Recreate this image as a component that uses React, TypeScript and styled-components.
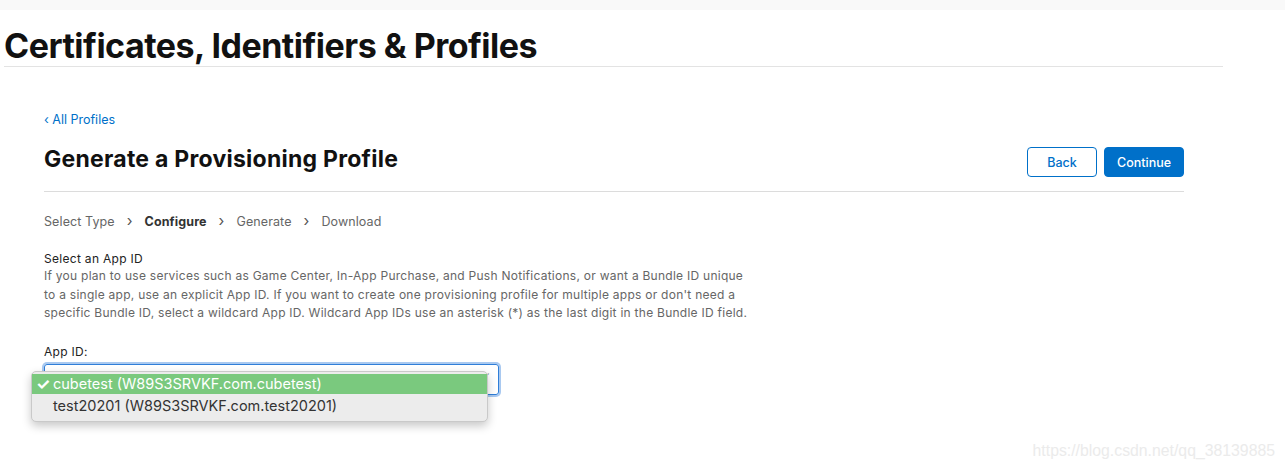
import React from 'react';
import styled, { createGlobalStyle } from 'styled-components';

const GlobalStyle = createGlobalStyle`
  html, body {
    margin: 0;
    padding: 0;
    background: #ffffff;
    font-family: Inter, "Noto Sans", "Liberation Sans", sans-serif;
    color: #1d1d1f;
  }
`;

const steps = [
  { label: 'Select Type', current: false },
  { label: 'Configure', current: true },
  { label: 'Generate', current: false },
  { label: 'Download', current: false },
];

const descriptionLines = [
  'If you plan to use services such as Game Center, In-App Purchase, and Push Notifications, or want a Bundle ID unique',
  "to a single app, use an explicit App ID. If you want to create one provisioning profile for multiple apps or don't need a",
  'specific Bundle ID, select a wildcard App ID. Wildcard App IDs use an asterisk (*) as the last digit in the Bundle ID field.',
];

const appIds = [
  'cubetest (W89S3SRVKF.com.cubetest)',
  'test20201 (W89S3SRVKF.com.test20201)',
];

const App: React.FC = () => {
  return (
    <Page>
      <GlobalStyle />
      <TopBar />
      <Header>
        <Title>Certificates, Identifiers &amp; Profiles</Title>
      </Header>
      <Main>
        <BackLink>‹ All Profiles</BackLink>
        <HeadRow>
          <PageTitle>Generate a Provisioning Profile</PageTitle>
          <Buttons>
            <Button width={70}>Back</Button>
            <Button width={80} primary>Continue</Button>
          </Buttons>
        </HeadRow>
        <Steps>
          {steps.map((step, i) => (
            <React.Fragment key={step.label}>
              {i > 0 && <Chevron>›</Chevron>}
              <Step current={step.current}>{step.label}</Step>
            </React.Fragment>
          ))}
        </Steps>
        <Section>
          <SectionTitle>Select an App ID</SectionTitle>
          <Description>
            {descriptionLines.map((line, i) => (
              <React.Fragment key={i}>
                {line}
                {i < descriptionLines.length - 1 && <br />}
              </React.Fragment>
            ))}
          </Description>
        </Section>
        <Field>
          <FieldLabel>App ID:</FieldLabel>
          <SelectBox>
            <Arrow>⌄</Arrow>
            <Menu>
              {appIds.map((id, i) => (
                <MenuItem key={id} selected={i === 0}>
                  <Check>{i === 0 ? '✓' : ''}</Check>
                  {id}
                </MenuItem>
              ))}
            </Menu>
          </SelectBox>
        </Field>
      </Main>
      <Watermark>https://blog.csdn.net/qq_38139885</Watermark>
    </Page>
  );
};

const Page = styled.div`
  position: relative;
  width: 1285px;
  height: 469px;
  overflow: hidden;
`;

const TopBar = styled.div`
  height: 10px;
  background: #f9f9f9;
`;

const Header = styled.div`
  margin: 0 62px 0 4px;
  padding-top: 16px;
  border-bottom: 1px solid #e3e3e3;
`;

const Title = styled.h1`
  margin: 0;
  font-size: 34px;
  line-height: 40px;
  font-weight: 700;
  letter-spacing: -0.5px;
  color: #111111;
`;

const Main = styled.div`
  width: 1140px;
  margin-left: 44px;
  padding-top: 45px;
`;

const BackLink = styled.a`
  display: block;
  font-size: 12.5px;
  line-height: 16px;
  color: #0070c9;
`;

const HeadRow = styled.div`
  display: flex;
  align-items: center;
  justify-content: space-between;
  height: 48px;
  margin-top: 9px;
  padding-bottom: 6px;
  border-bottom: 1px solid #dcdcdc;
`;

const PageTitle = styled.h2`
  margin: -4px 0 0;
  font-size: 23px;
  font-weight: 700;
  letter-spacing: 0.25px;
  color: #111111;
`;

const Buttons = styled.div`
  display: flex;
  gap: 7px;
  margin-top: 2px;
`;

const Button = styled.button<{ primary?: boolean; width: number }>`
  width: ${({ width }) => width}px;
  height: 30px;
  padding: 0;
  border-radius: 4px;
  border: 1px solid #0070c9;
  background: ${({ primary }) => (primary ? '#0070c9' : '#ffffff')};
  color: ${({ primary }) => (primary ? '#ffffff' : '#0070c9')};
  font-family: inherit;
  font-size: 12.5px;
  font-weight: 500;
`;

const Steps = styled.div`
  display: flex;
  align-items: center;
  gap: 12px;
  margin-top: 22px;
  font-size: 12.5px;
  line-height: 16px;
  letter-spacing: 0.1px;
`;

const Step = styled.span<{ current: boolean }>`
  color: ${({ current }) => (current ? '#333333' : '#666666')};
  font-weight: ${({ current }) => (current ? 700 : 400)};
`;

const Chevron = styled.span`
  color: #555555;
  font-size: 15px;
  margin-top: -2px;
`;

const Section = styled.div`
  margin-top: 21px;
`;

const SectionTitle = styled.div`
  font-size: 12px;
  line-height: 16px;
  letter-spacing: 0.3px;
  color: #222222;
`;

const Description = styled.p`
  margin: 0;
  white-space: nowrap;
  font-size: 12px;
  line-height: 18.5px;
  letter-spacing: 0.26px;
  color: #666666;
`;

const Field = styled.div`
  margin-top: 21px;
`;

const FieldLabel = styled.div`
  font-size: 12px;
  line-height: 16px;
  letter-spacing: 0.3px;
  color: #222222;
`;

const SelectBox = styled.div`
  position: relative;
  margin-top: 4px;
  width: 453px;
  height: 29px;
  border: 1px solid #2f7ed8;
  border-radius: 3px;
  box-shadow: 0 0 0 2px #a9c9f0;
`;

const Arrow = styled.span`
  position: absolute;
  right: 8px;
  top: 1px;
  font-size: 11px;
  color: #777777;
`;

const Menu = styled.div`
  position: absolute;
  left: -14px;
  top: 6px;
  width: 455px;
  padding: 2px 0 5px;
  background: #ececec;
  border: 1px solid #c9c9c9;
  border-radius: 5px;
  box-shadow: 0 4px 10px rgba(0, 0, 0, 0.22);
`;

const MenuItem = styled.div<{ selected: boolean }>`
  display: flex;
  align-items: center;
  height: 20px;
  margin-bottom: ${({ selected }) => (selected ? '2px' : '0')};
  padding-left: 4px;
  font-size: 14.5px;
  color: ${({ selected }) => (selected ? '#ffffff' : '#333333')};
  background: ${({ selected }) => (selected ? '#7ac97e' : 'transparent')};
`;

const Check = styled.span`
  display: inline-block;
  width: 17px;
  font-size: 16px;
  font-weight: 700;
`;

const Watermark = styled.div`
  position: absolute;
  right: 10px;
  bottom: 9px;
  font-family: "Liberation Sans", Arial, sans-serif;
  font-size: 15.8px;
  color: #ebebeb;
`;

export default App;
